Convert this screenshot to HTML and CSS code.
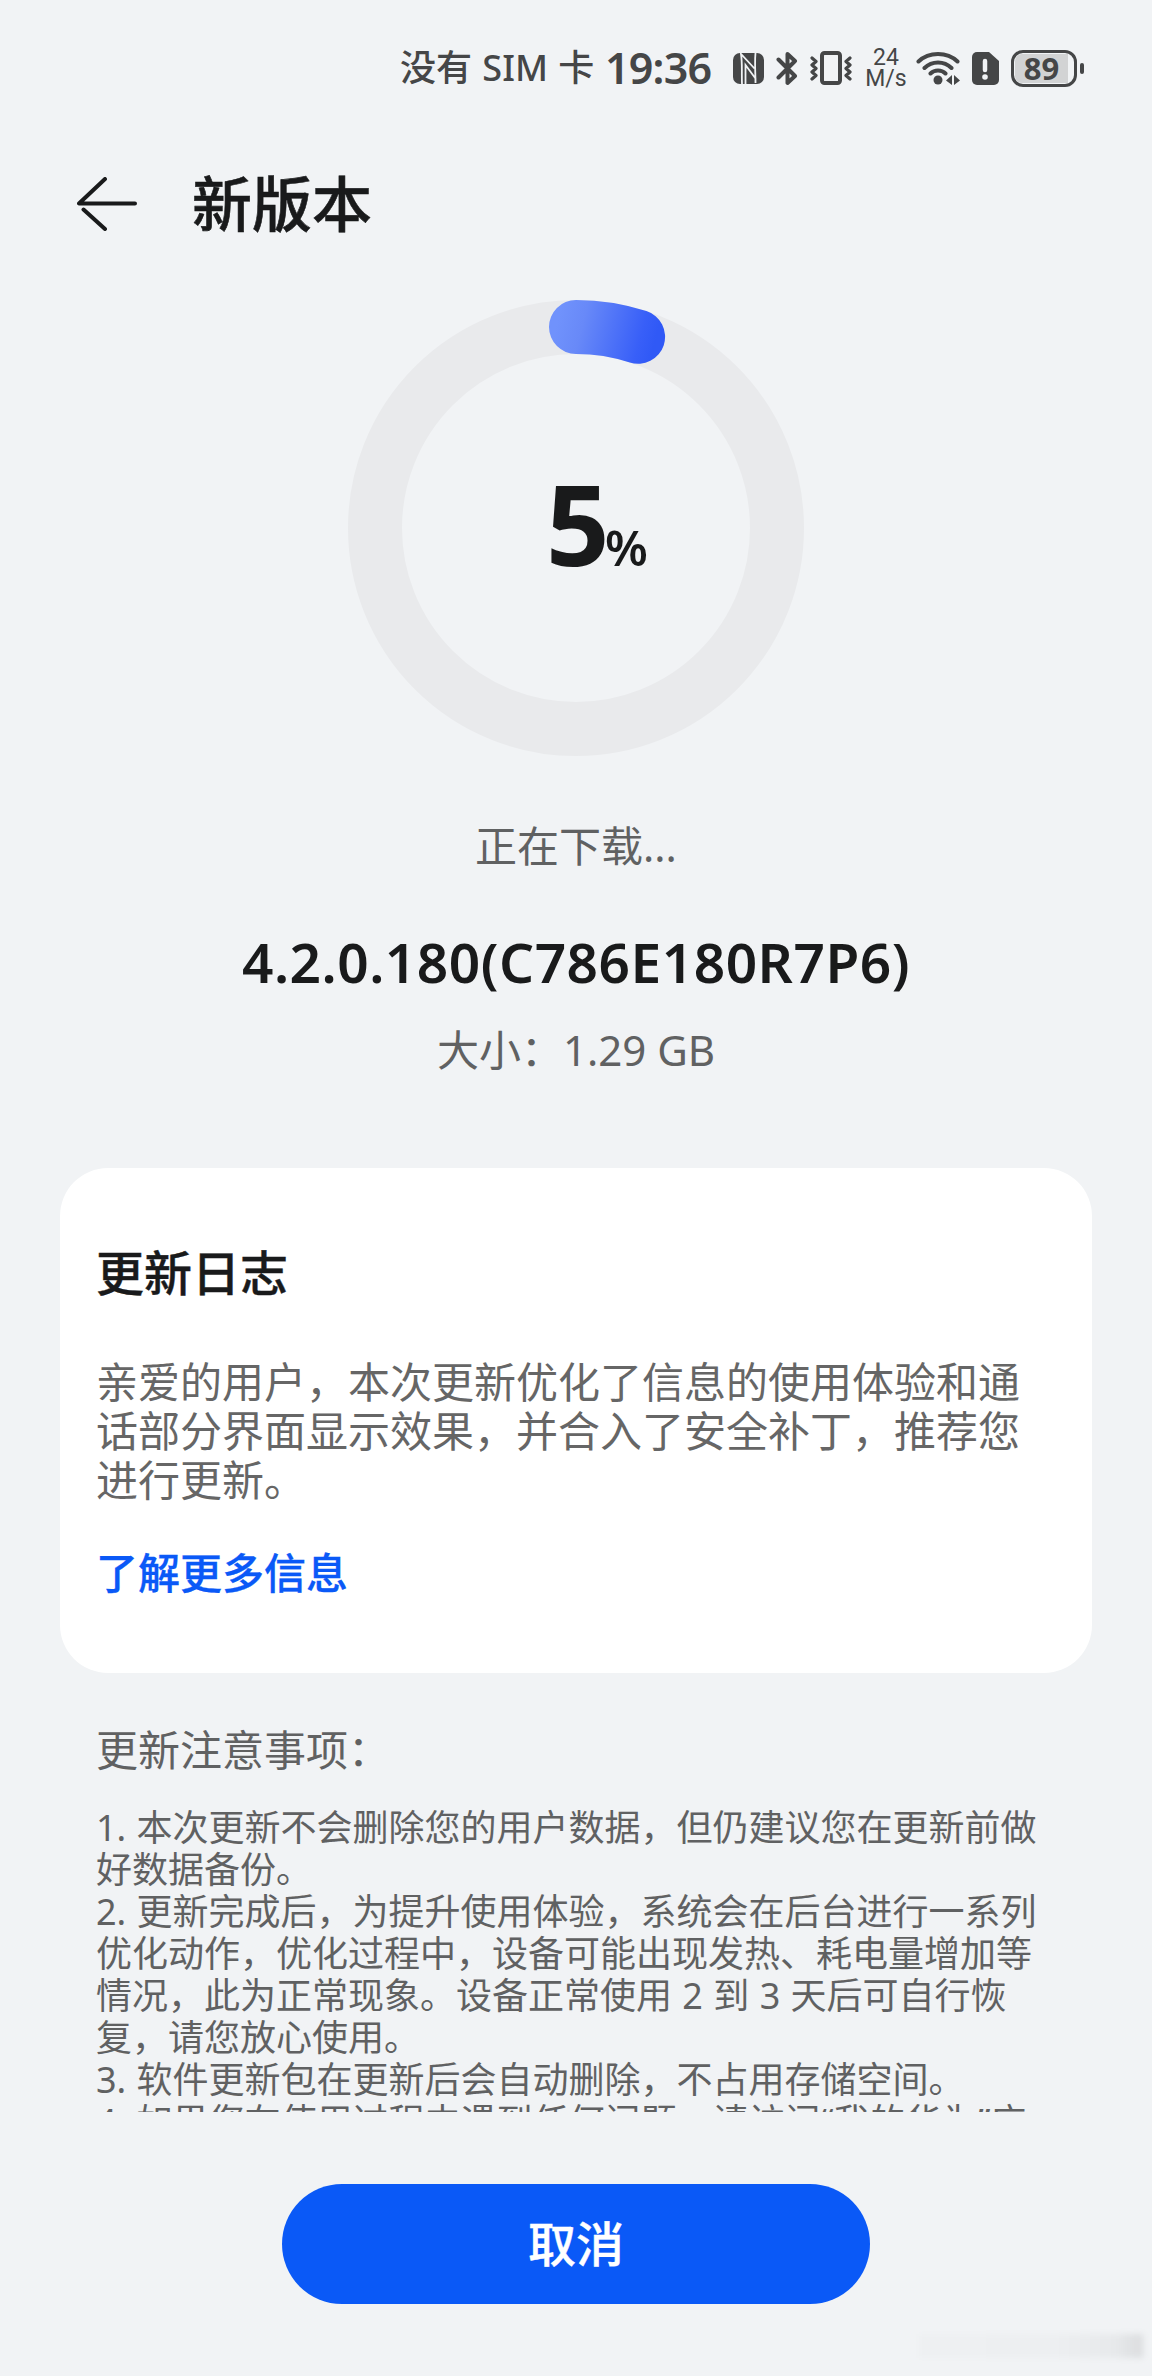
FILE: index.html
```html
<!DOCTYPE html>
<html lang="zh-CN">
<head>
    <meta charset="UTF-8">
    <meta name="viewport" content="width=device-width, initial-scale=1.0">
    <title>新版本</title>
    <link rel="stylesheet" href="styles.css">
</head>
<body>
    <div class="status-bar">
        <span class="carrier">没有 SIM 卡</span>
        <span class="time">19:36</span>
        <svg class="icon nfc" width="31" height="31" viewBox="0 0 31 31">
            <rect width="31" height="31" rx="7" fill="#454647"/>
            <path d="M9 31C8.500 20 9.500 10 8 1L21.500 15.500M12.500 31V12L22.500 25.500V30C22.500 20 21.500 10 22.500 0" fill="none" stroke="#f1f3f5" stroke-width="1.800"/>
        </svg>
        <svg class="icon bluetooth" width="22" height="35" viewBox="0 0 22 35">
            <path d="M2.500 8.500L19 25L11.500 32V3L19 10L2.500 26.500" fill="none" stroke="#454647" stroke-width="4" stroke-linecap="round" stroke-linejoin="round"/>
        </svg>
        <svg class="icon vibrate" width="42" height="34" viewBox="0 0 42 34">
            <rect x="12" y="2" width="18" height="30" rx="2.500" fill="none" stroke="#454647" stroke-width="4"/>
            <path d="M2 7L6 10.500L2 14L6 17.500L2 21L6 24.500L2 28M40 7L36 10.500L40 14L36 17.500L40 21L36 24.500L40 28" fill="none" stroke="#454647" stroke-width="3.200" stroke-linecap="round" stroke-linejoin="round"/>
        </svg>
        <span class="speed"><span>24</span><span>M/s</span></span>
        <svg class="icon wifi" width="44" height="34" viewBox="0 0 44 34">
            <path d="M2.500 10.500C13 .5 31 .5 41.500 10.500M8.500 17C16 9.500 28 9.500 35.500 17M14.500 22.500C18.500 18.500 25.500 18.500 29.500 22.500" fill="none" stroke="#454647" stroke-width="4" stroke-linecap="round"/>
            <circle cx="22" cy="29" r="4.500" fill="#454647"/>
            <path d="M36 24V34L30 29.500ZM38 24V34L44 29.500Z" fill="#454647"/>
        </svg>
        <svg class="icon sim" width="27" height="33" viewBox="0 0 27 33">
            <path d="M5 0H17L27 9V28a5 5 0 0 1-5 5H5a5 5 0 0 1-5-5V5a5 5 0 0 1 5-5Z" fill="#454647"/>
            <path d="M13 9V18" stroke="#f1f3f5" stroke-width="4.500" stroke-linecap="round"/>
            <circle cx="13" cy="25" r="2.800" fill="#f1f3f5"/>
        </svg>
        <span class="battery"><span class="battery-level">89</span></span>
        <span class="battery-tip"></span>
    </div>

    <div class="header">
        <svg class="back" width="60" height="54" viewBox="0 0 60 54">
            <path d="M28 2L2 26.500H58M6.500 32.500L28 52" fill="none" stroke="#191a1b" stroke-width="4" stroke-linecap="round" stroke-linejoin="round"/>
        </svg>
        <h1 class="title">新版本</h1>
    </div>

    <div class="progress">
        <svg class="ring" width="456" height="456" viewBox="0 0 456 456">
            <defs>
                <linearGradient id="arc" gradientUnits="userSpaceOnUse" x1="210" y1="20" x2="306" y2="45">
                    <stop offset="0" stop-color="#7092fc"/>
                    <stop offset="0.250" stop-color="#6889f8"/>
                    <stop offset="0.850" stop-color="#385ff8"/>
                    <stop offset="1" stop-color="#3059f6"/>
                </linearGradient>
            </defs>
            <circle cx="228" cy="228" r="201" fill="none" stroke="#e9eaec" stroke-width="54"/>
            <path d="M228 27A201 201 0 0 1 290.100 36.800" fill="none" stroke="url(#arc)" stroke-width="54" stroke-linecap="round"/>
        </svg>
        <div class="percent"><span class="number">5</span><span class="sign">%</span></div>
    </div>

    <div class="state">正在下载...</div>
    <div class="version">4.2.0.180(C786E180R7P6)</div>
    <div class="size">大小：1.29 GB</div>

    <div class="card">
        <h2 class="card-title">更新日志</h2>
        <p class="card-text">亲爱的用户，本次更新优化了信息的使用体验和通话部分界面显示效果，并合入了安全补丁，推荐您进行更新。</p>
        <a class="card-link">了解更多信息</a>
    </div>

    <div class="notes">
        <div class="notes-title">更新注意事项：</div>
        <div class="notes-list">
            <p>1. 本次更新不会删除您的用户数据，但仍建议您在更新前做好数据备份。</p>
            <p>2. 更新完成后，为提升使用体验，系统会在后台进行一系列优化动作，优化过程中，设备可能出现发热、耗电量增加等情况，此为正常现象。设备正常使用 2 到 3 天后可自行恢复，请您放心使用。</p>
            <p>3. 软件更新包在更新后会自动删除，不占用存储空间。</p>
            <p>4. 如果您在使用过程中遇到任何问题，请访问“我的华为”应</p>
        </div>
    </div>

    <div class="footer">
        <button class="cancel">取消</button>
    </div>
    <div class="watermark"></div>
</body>
</html>
```

FILE: styles.css
```css
* {
    box-sizing: border-box;
}
body {
    font-family: "Noto Sans", "Noto Sans CJK SC", sans-serif;
    width: 1152px;
    height: 2376px;
    margin: 0;
    background-color: #f1f3f5;
    color: #191a1b;
    overflow: hidden;
    position: relative;
}
h1, h2, p {
    margin: 0;
    font-weight: 500;
}
.status-bar {
    display: flex;
    align-items: center;
    height: 136px;
    padding-left: 400px;
    color: #454647;
    white-space: nowrap;
}
.icon {
    display: block;
    flex: none;
}
.carrier {
    width: 205px;
    font-size: 36px;
    font-weight: 500;
    line-height: 40px;
    word-spacing: 1px;
}
.time {
    width: 128px;
    font-size: 43px;
    font-weight: 600;
    line-height: 48px;
    letter-spacing: -0.8px;
}
.bluetooth {
    margin-left: 12px;
}
.vibrate {
    margin-left: 12px;
}
.speed {
    display: flex;
    flex-direction: column;
    align-items: center;
    width: 40px;
    margin-left: 14px;
    font-family: Roboto, sans-serif;
    font-size: 23px;
    line-height: 21px;
}
.wifi {
    margin-left: 10px;
}
.sim {
    margin-left: 12px;
}
.battery {
    display: flex;
    width: 66px;
    height: 37px;
    margin-left: 12px;
    padding: 1px;
    border: 3px solid #454647;
    border-radius: 12px;
}
.battery-level {
    width: 53px;
    border-radius: 7px 0 0 7px;
    background-color: #d2d3d4;
    font-size: 31px;
    font-weight: 700;
    line-height: 28px;
    text-align: center;
}
.battery-tip {
    width: 4px;
    height: 11px;
    margin-left: 3px;
    border-radius: 2px;
    background-color: #454647;
}
.header {
    display: flex;
    align-items: center;
    height: 136px;
    padding-left: 77px;
}
.title {
    margin-left: 55px;
    font-size: 60px;
    line-height: 80px;
    -webkit-text-stroke: 0.6px #191a1b;
}
.progress {
    display: grid;
    width: 456px;
    height: 456px;
    margin: 28px auto 0;
}
.ring {
    grid-area: 1 / 1;
}
.percent {
    display: flex;
    grid-area: 1 / 1;
    align-items: baseline;
    padding: 158px 0 0 198px;
    line-height: 130px;
}
.number {
    width: 59px;
    font-size: 111px;
    font-weight: 700;
}
.sign {
    font-size: 49px;
    font-weight: 600;
    letter-spacing: -2px;
}
.state {
    margin-top: 60px;
    color: #606162;
    font-size: 42px;
    line-height: 60px;
    text-align: center;
}
.version {
    margin-top: 50px;
    font-size: 55px;
    font-weight: 600;
    line-height: 72px;
    letter-spacing: 0.5px;
    text-align: center;
    white-space: nowrap;
}
.size {
    margin-top: 22px;
    color: #606162;
    font-size: 42px;
    line-height: 60px;
    text-align: center;
}
.card {
    height: 505px;
    margin: 88px 60px 0;
    padding: 73px 36px 0;
    border-radius: 48px;
    background-color: #fff;
}
.card-title {
    font-size: 48px;
    line-height: 64px;
    -webkit-text-stroke: 0.4px #191a1b;
}
.card-text {
    margin-top: 52px;
    color: #666;
    font-size: 42px;
    font-weight: 400;
    line-height: 49px;
}
.card-link {
    display: block;
    margin-top: 44px;
    color: #0a59f7;
    font-size: 42px;
    font-weight: 500;
    line-height: 49px;
    -webkit-text-stroke: 0.3px #0a59f7;
}
.notes {
    height: 439px;
    padding: 47px 96px 0;
    color: #606162;
    overflow: hidden;
}
.notes-title {
    font-size: 42px;
    line-height: 60px;
}
.notes-list {
    margin-top: 27px;
    font-size: 36px;
    line-height: 42px;
    word-spacing: 1px;
}
.notes-list p {
    font-weight: 400;
}
.footer {
    display: flex;
    justify-content: center;
    padding-top: 72px;
}
.cancel {
    width: 588px;
    height: 120px;
    padding: 0 0 6px;
    border: none;
    border-radius: 60px;
    background-color: #0a59f7;
    color: #fff;
    font-family: inherit;
    font-size: 48px;
    font-weight: 500;
    cursor: pointer;
    -webkit-text-stroke: 0.4px #fff;
}
.watermark {
    position: absolute;
    right: 9px;
    bottom: 18px;
    width: 224px;
    height: 24px;
    background: linear-gradient(90deg, rgba(0, 0, 0, 0.010), rgba(0, 0, 0, 0.015) 60%, rgba(0, 0, 0, 0.040) 88%, rgba(0, 0, 0, 0.090));
    filter: blur(3px);
}
```
